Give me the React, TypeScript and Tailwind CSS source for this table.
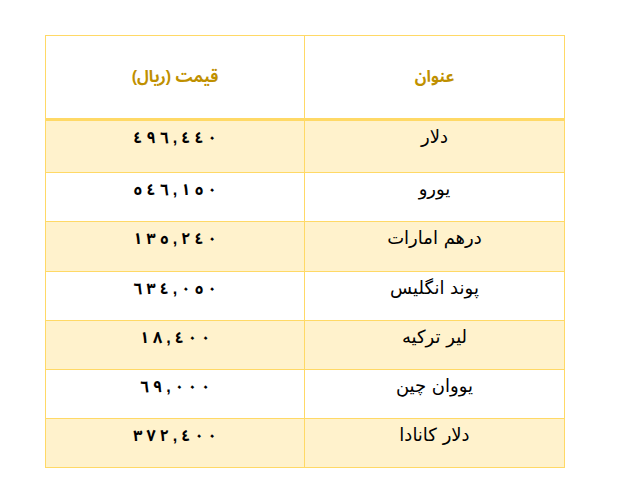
const rows = [
  { title: 'دلار', price: '٤٩٦,٤٤٠', h: 'h-[52px]' },
  { title: 'یورو', price: '٥٤٦,١٥٠', h: 'h-[49px]' },
  { title: 'درهم امارات', price: '١٣٥,٢٤٠', h: 'h-[50px]' },
  { title: 'پوند انگلیس', price: '٦٣٤,٠٥٠', h: 'h-[49px]' },
  { title: 'لیر ترکیه', price: '١٨,٤٠٠', h: 'h-[49px]' },
  { title: 'یووان چین', price: '٦٩,٠٠٠', h: 'h-[49px]' },
  { title: 'دلار کانادا', price: '٣٧٢,٤٠٠', h: 'h-[48px]' },
];

export default function App() {
  return (
    <div className="min-h-[503px] bg-white pt-[35px] pl-[45px] font-['Liberation_Sans','Noto_Sans_Arabic',sans-serif]">
      <div dir="rtl" className="w-[520px] border border-[#ffd966]">
        {/* header */}
        <div className="grid h-[85px] grid-cols-2 border-b-[3px] border-[#ffd966] text-[16px] font-bold text-[#bf9000]">
          <div className="flex items-center justify-center">عنوان</div>
          <div className="flex items-center justify-center border-r border-[#ffd966]">قیمت (ریال)</div>
        </div>

        {rows.map((row, i) => (
          <div
            key={row.title}
            className={`grid grid-cols-2 text-black ${row.h} ${i % 2 === 0 ? 'bg-[#fff2cc]' : 'bg-white'} ${i < rows.length - 1 ? 'border-b border-[#ffd966]' : ''}`}
          >
            <div className="pt-[2px] text-center font-['DejaVu_Sans',sans-serif] text-[18px]">{row.title}</div>
            <div className="flex justify-center border-r border-[#ffd966] pt-[5px] text-[16px] font-bold">
              <span dir="ltr" className="inline-flex h-fit gap-[4px]">
                {row.price.split('').map((ch, j) => (
                  <span key={j}>{ch}</span>
                ))}
              </span>
            </div>
          </div>
        ))}
      </div>
    </div>
  );
}
